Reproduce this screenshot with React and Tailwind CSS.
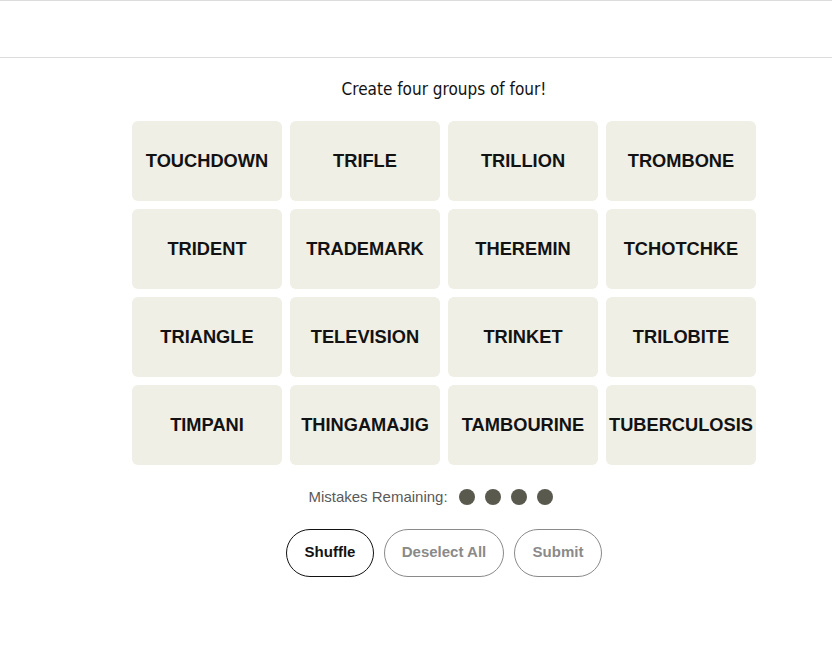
const words = [
  "TOUCHDOWN", "TRIFLE", "TRILLION", "TROMBONE",
  "TRIDENT", "TRADEMARK", "THEREMIN", "TCHOTCHKE",
  "TRIANGLE", "TELEVISION", "TRINKET", "TRILOBITE",
  "TIMPANI", "THINGAMAJIG", "TAMBOURINE", "TUBERCULOSIS",
];

export default function App() {
  return (
    <div className="min-h-[656px] bg-white" style={{ fontFamily: '"Liberation Sans", Arial, sans-serif' }}>
      <div className="h-[58px] border-t border-b border-[#dcdcdc]" />
      <div className="pl-[56px] flex flex-col items-center">
        <p
          className="mt-[19px] text-[17px] leading-[24px] text-[#121212]"
          style={{ fontFamily: '"DejaVu Sans Condensed", "Liberation Sans", sans-serif', fontStretch: "condensed" }}
        >
          Create four groups of four!
        </p>
        <div className="mt-[20px] grid grid-cols-4 gap-2 w-[624px]">
          {words.map((w) => (
            <button
              key={w}
              className="h-20 rounded-md bg-[#efefe6] flex items-center justify-center text-[18.25px] font-bold text-[#121212] whitespace-nowrap"
            >
              {w}
            </button>
          ))}
        </div>
        <div className="mt-[21px] pr-[27px] flex items-center text-[15px] text-[#5a5a5a]">
          <span className="mr-[11px]">Mistakes Remaining:</span>
          <div className="flex gap-[10px]">
            {[0, 1, 2, 3].map((i) => (
              <span key={i} className="w-4 h-4 rounded-full bg-[#5a594e]" />
            ))}
          </div>
        </div>
        <div className="mt-[20px] flex gap-[10px]">
          <button className="w-[88px] h-12 rounded-full border border-[#121212] text-[15px] font-semibold text-[#121212]">
            Shuffle
          </button>
          <button className="w-[120px] h-12 rounded-full border border-[#8a8a8a] text-[15px] font-semibold text-[#8a8a8a]">
            Deselect All
          </button>
          <button className="w-[88px] h-12 rounded-full border border-[#8a8a8a] text-[15px] font-semibold text-[#8a8a8a]">
            Submit
          </button>
        </div>
      </div>
    </div>
  );
}
